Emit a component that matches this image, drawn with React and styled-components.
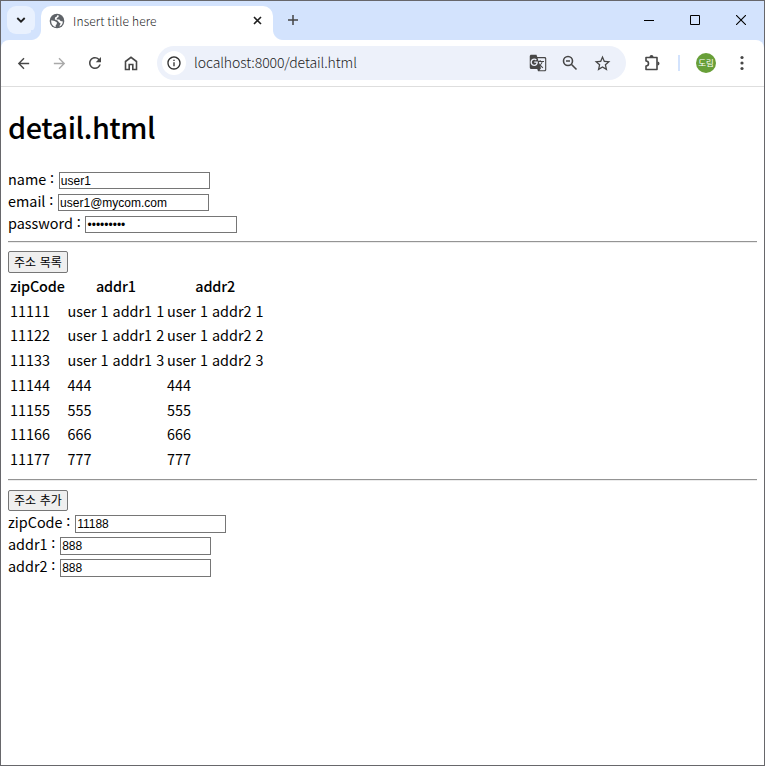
import React from 'react';
import styled, { createGlobalStyle } from 'styled-components';
import {
  MdArrowBack, MdArrowForward, MdRefresh, MdInfoOutline,
  MdGTranslate, MdStarOutline,
} from 'react-icons/md';

const GlobalStyle = createGlobalStyle`
  * { box-sizing: border-box; }
  body { margin: 0; background: #fff; }
`;

const ui = `'Noto Sans CJK KR', 'Noto Sans', sans-serif`;

const Window = styled.div`
  width: 765px;
  height: 766px;
  display: flex;
  flex-direction: column;
  overflow: hidden;
  border: 1px solid #67676b;
  background: #fff;
  font-family: ${ui};
`;

const TabStrip = styled.header`
  height: 39px;
  flex: none;
  display: flex;
  background: #d3e3fd;
`;

const TabSearch = styled.button`
  width: 28px;
  height: 28px;
  margin: 5px 6px 0;
  padding: 0;
  border: 0;
  border-radius: 9px;
  background: #e9f1fe;
  display: grid;
  place-items: center;
`;

const Tab = styled.div`
  position: relative;
  width: 232px;
  height: 34px;
  margin-top: 5px;
  padding: 0 11px 5px 8px;
  border-radius: 10px 10px 0 0;
  background: #fff;
  display: flex;
  align-items: center;
  color: #1f1f1f;
  &::before, &::after {
    content: '';
    position: absolute;
    bottom: 0;
    width: 10px;
    height: 10px;
  }
  &::before { left: -10px; background: radial-gradient(circle at 0 0, #d3e3fd 9.5px, #fff 10.5px); }
  &::after { right: -10px; background: radial-gradient(circle at 100% 0, #d3e3fd 9.5px, #fff 10.5px); }
`;

const TabTitle = styled.span`
  flex: 1;
  margin-left: 8px;
  padding-top: 1px;
  font-size: 12px;
  line-height: 18px;
  font-weight: 300;
  letter-spacing: 0.13px;
`;

const NewTab = styled.div`
  margin: 10px 0 0 11px;
  width: 18px;
  height: 18px;
  display: grid;
  place-items: center;
`;

const Controls = styled.div`
  margin-left: auto;
  display: flex;
`;

const Control = styled.div`
  width: 46px;
  height: 38px;
  display: grid;
  place-items: center;
`;

const ToolbarBack = styled.div`
  flex: none;
  background: linear-gradient(#d3e3fd 50%, #fff 50%);
`;

const Toolbar = styled.nav`
  height: 47px;
  display: flex;
  align-items: center;
  border-bottom: 1px solid #dedede;
  padding-left: 4px;
  border-radius: 8px 8px 0 0;
  background: #fff;
`;

const Tool = styled.div`
  width: ${(p) => p.$w || 36}px;
  height: 34px;
  flex: none;
  display: grid;
  place-items: center;
  color: ${(p) => (p.$off ? '#a9a9a9' : '#474747')};
`;

const Omnibox = styled.div`
  width: 469px;
  height: 34px;
  flex: none;
  margin-left: 8px;
  padding: 0 8px 0 5px;
  border-radius: 17px;
  background: #edf1fa;
  display: flex;
  align-items: center;
`;

const SiteInfo = styled.div`
  width: 24px;
  height: 24px;
  border-radius: 50%;
  background: #fff;
  display: grid;
  place-items: center;
  color: #303030;
`;

const Url = styled.span`
  flex: 1;
  margin-left: 8px;
  padding-bottom: 2px;
  font-size: 14px;
  line-height: 20px;
  font-weight: 300;
  letter-spacing: -0.08px;
  color: #222;
`;

const Divider = styled.div`
  flex: none;
  width: 2px;
  height: 16px;
  margin-right: 16px;
  background: #d3e3fd;
`;

const Avatar = styled.div`
  flex: none;
  width: 20px;
  height: 20px;
  margin-right: 8px;
  border-radius: 50%;
  background: #689f38;
  color: #fff;
  font-size: 8.5px;
  line-height: 19px;
  text-align: center;
  white-space: nowrap;
`;

const Page = styled.main`
  flex: 1;
  padding: 0 7px;
  font-size: 14.4px;
  word-spacing: 1.1px;
  color: #000;
`;

const Heading = styled.h1`
  margin: 19px 0 19px;
  font-size: 28.8px;
  line-height: 42px;
  font-weight: 500;
  letter-spacing: -0.42px;
`;

const Field = styled.label`
  display: flex;
  align-items: center;
  height: 22px;
  white-space: pre;
`;

const Colon = styled.span`
  transform: translate(-0.5px, -2px);
`;

const Input = styled.input`
  width: ${(p) => (p.type === 'password' ? 152 : 151)}px;
  height: ${(p) => (p.$tall ? 18 : 17)}px;
  margin: ${(p) => (p.$tall ? 4 : 5)}px 0 0;
  padding: 1px 2px 1px 1px;
  border: 1px solid #767676;
  border-radius: 0;
  background: #fff;
  color: #000;
  outline: 0;
  font-family: 'Liberation Sans', Arial, sans-serif;
  font-size: 12px;
`;

const Rule = styled.hr`
  height: 2px;
  margin: ${(p) => p.$m};
  border: 0;
  border-top: 1px solid #949494;
  border-bottom: 1px solid #ececec;
`;

const Button = styled.button`
  display: block;
  width: 60px;
  height: ${(p) => p.$h || 22}px;
  padding: 0;
  border: 1px solid #767676;
  border-radius: 2px;
  background: #efefef;
  color: #000;
  font-family: ${ui};
  font-size: 12px;
  line-height: 18px;
  word-spacing: 1px;
  white-space: nowrap;
`;

const Table = styled.table`
  border-collapse: separate;
  border-spacing: 2px;
  line-height: 20.7px;
  word-spacing: 0.8px;
  th, td { padding: 1px 0.8px 1px 0; white-space: nowrap; }
  th { font-weight: 500; text-align: center; letter-spacing: -0.13px; }
`;

const rows = [
  ['11111', 'user 1 addr1 1', 'user 1 addr2 1'],
  ['11122', 'user 1 addr1 2', 'user 1 addr2 2'],
  ['11133', 'user 1 addr1 3', 'user 1 addr2 3'],
  ['11144', '444', '444'],
  ['11155', '555', '555'],
  ['11166', '666', '666'],
  ['11177', '777', '777'],
];

const LabeledField = ({ label, ...rest }) => (
  <Field>
    <span>{label} </span>
    <Colon>: </Colon>
    <Input {...rest} />
  </Field>
);

const Globe = () => (
  <svg width="16" height="16" viewBox="0 0 16 16">
    <circle cx="8" cy="8" r="7.3" fill="#5f6368" />
    <path d="M2.200 7.200 5.500 8l2.300 1.300v1.800l-1.100 1.200v1.600C3.900 13.400 1.900 11 2.200 7.200ZM8.200 2.300l1.600.2-.3 1.500-1.600.9-.4 1.500 2.800.2 1.200 1.500 2.400.3C13.700 11.300 12 13 10.300 13.500l1.300-3.100-1.500-1-1.600-2L5.900 6.400 6 4.500l1.600-.7Z" fill="#fff" />
  </svg>
);

export default function App() {
  return (
    <>
      <GlobalStyle />
      <Window>
        <TabStrip>
          <TabSearch aria-label="Search tabs">
            <svg width="10" height="8" viewBox="0 0 10 8" fill="none" stroke="#1f1f1f" strokeWidth="1.8"><path d="M1.3 2 5 5.7 8.7 2" /></svg>
          </TabSearch>
          <Tab>
            <Globe />
            <TabTitle>Insert title here</TabTitle>
            <svg width="9" height="9" stroke="#1f1f1f" strokeWidth="1.6"><path d="m1 1 7 7M8 1 1 8" /></svg>
          </Tab>
          <NewTab>
            <svg width="12" height="12" stroke="#444" strokeWidth="1.5"><path d="M6 1v10M1 6h10" /></svg>
          </NewTab>
          <Controls>
            <Control><svg width="10" height="10"><path d="M0 5.5h10" stroke="#000" /></svg></Control>
            <Control><svg width="10" height="10"><path d="M.5.5h9v9h-9z" fill="none" stroke="#000" /></svg></Control>
            <Control><svg width="10" height="10"><path d="m0 0 10 10M10 0 0 10" stroke="#000" strokeWidth="1.1" /></svg></Control>
          </Controls>
        </TabStrip>
        <ToolbarBack>
          <Toolbar>
            <Tool><MdArrowBack size={17} /></Tool>
            <Tool $off><MdArrowForward size={17} /></Tool>
            <Tool><MdRefresh size={18} /></Tool>
            <Tool>
              <svg width="14" height="15" viewBox="0 0 14 15" fill="none" stroke="currentColor" strokeWidth="1.6"><path d="M1.5 5.5 7 1.3l5.5 4.2v8H8.800V8.500H5.200v5H1.5Z" /></svg>
            </Tool>
            <Omnibox>
              <SiteInfo><MdInfoOutline size={16} /></SiteInfo>
              <Url>localhost:8000/detail.html</Url>
              <Tool $w={32}><MdGTranslate size={18} /></Tool>
              <Tool $w={32}>
                <svg width="16" height="16" viewBox="0 0 16 16" fill="none" stroke="currentColor" strokeWidth="1.6"><circle cx="6" cy="6" r="4.5" /><path d="m9.300 9.300 5.200 5.200M4 6h4" /></svg>
              </Tool>
              <Tool $w={32}><MdStarOutline size={19} /></Tool>
            </Omnibox>
            <Tool $w={52}>
              <svg width="18" height="18" viewBox="0 0 18 18" fill="none" stroke="currentColor" strokeWidth="1.6"><path d="M3 3.500H14V15.500H3V12a2.500 2.500 0 0 0 0-5Z" strokeLinejoin="round" /><path fill="currentColor" stroke="none" d="M6.500 3a2 2 0 0 1 4 0zM14.500 7.500a2 2 0 0 1 0 4z" /></svg>
            </Tool>
            <Divider />
            <Avatar>도림</Avatar>
            <Tool>
              <svg width="4" height="16" fill="currentColor"><circle cx="2" cy="2.500" r="1.600" /><circle cx="2" cy="8" r="1.600" /><circle cx="2" cy="13.500" r="1.600" /></svg>
            </Tool>
          </Toolbar>
        </ToolbarBack>
        <Page>
          <Heading>detail.html</Heading>
          <LabeledField label="name" defaultValue="user1" />
          <LabeledField label="email" defaultValue="user1@mycom.com" />
          <LabeledField label="password" type="password" defaultValue="password1" />
          <Rule $m="8px 0 8px" />
          <Button>주소 목록</Button>
          <Table>
            <thead><tr><th>zipCode</th><th>addr1</th><th>addr2</th></tr></thead>
            <tbody>
              {rows.map((r) => (
                <tr key={r[0]}>{r.map((c, i) => <td key={i}>{c}</td>)}</tr>
              ))}
            </tbody>
          </Table>
          <Rule $m="6px 0 9px" />
          <Button $h={21}>주소 추가</Button>
          <LabeledField $tall label="zipCode" defaultValue="11188" />
          <LabeledField $tall label="addr1" defaultValue="888" />
          <LabeledField $tall label="addr2" defaultValue="888" />
        </Page>
      </Window>
    </>
  );
}
